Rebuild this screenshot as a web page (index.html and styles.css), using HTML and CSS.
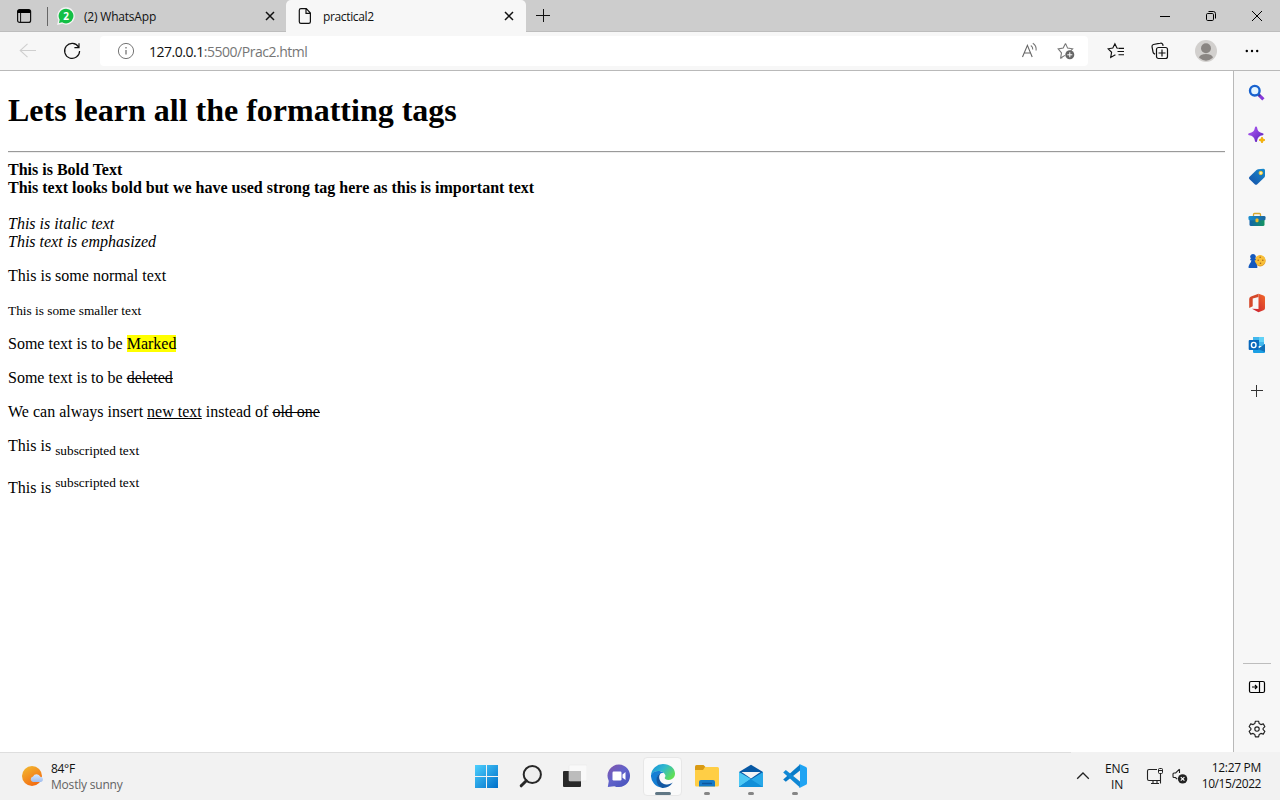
FILE: index.html
```html
<!DOCTYPE html>
<html lang="en">
<head>
<meta charset="utf-8">
<title>practical2</title>
<link rel="stylesheet" href="styles.css">
</head>
<body>
<div class="desktop">
  <header class="tabstrip">
    <span class="tab-actions"><svg width="16" height="16" viewBox="0 0 16 16"><rect x="1.6" y="1.6" width="13" height="12.8" rx="2" fill="none" stroke="#111" stroke-width="1.2"/><path d="M1.5 5V3.5a2 2 0 0 1 2-2h9a2 2 0 0 1 2 2V5z" fill="#000"/><path d="M4.6 5v9" stroke="#111"/></svg></span>
    <div class="tab">
      <svg width="18" height="18" viewBox="0 0 18 18"><path d="M9 1a8 8 0 1 1-3.8 15L1 17l1-4.1A8 8 0 0 1 9 1z" fill="#13bf45" stroke="#f4f4f4" stroke-width="1.3"/><text x="9" y="13" text-anchor="middle" class="badge">2</text></svg>
      <span class="tab-title whatsapp">(2) WhatsApp</span>
      <svg class="close" width="10" height="10" viewBox="0 0 10 10"><path d="M1 1l8 8M9 1l-8 8" stroke="#111" stroke-width="1.5"/></svg>
    </div>
    <div class="tab active">
      <svg width="14" height="18" viewBox="0 0 14 18"><path d="M3 1.6h5.3L12.4 6v8.7a1.7 1.7 0 0 1-1.7 1.7H3a1.7 1.7 0 0 1-1.7-1.7V3.3A1.7 1.7 0 0 1 3 1.6zM8 1.8V6.4h4.2" fill="none" stroke="#111" stroke-width="1.2"/></svg>
      <span class="tab-title practical">practical2</span>
      <svg class="close" width="10" height="10" viewBox="0 0 10 10"><path d="M1 1l8 8M9 1l-8 8" stroke="#111" stroke-width="1.5"/></svg>
    </div>
    <span class="new-tab"><svg width="14" height="14" viewBox="0 0 14 14"><path d="M0 6.5h14M7.5 0v13" stroke="#111"/></svg></span>
    <div class="window-buttons">
      <span><svg width="10" height="10" viewBox="0 0 10 10"><path d="M0 5.5h10" stroke="#000"/></svg></span>
      <span><svg width="10" height="10" viewBox="0 0 10 10"><rect x=".5" y="2.5" width="7" height="7" rx="1.2" fill="none" stroke="#000"/><path d="M2.5.5h4.8a2.2 2.2 0 0 1 2.2 2.2v4.8" fill="none" stroke="#000"/></svg></span>
      <span><svg width="10" height="10" viewBox="0 0 10 10"><path d="M0 0l10 10M10 0L0 10" stroke="#000"/></svg></span>
    </div>
  </header>

  <div class="toolbar">
    <span class="tool"><svg width="18" height="16" viewBox="0 0 18 16"><path d="M17 7.5H1.5M8.5 .8L1.2 7.5l7.3 6.7" fill="none" stroke="#cfcfcf" stroke-width="1.1"/></svg></span>
    <span class="tool"><svg width="18" height="18" viewBox="0 0 18 18"><path d="M15.5 5A7.5 7.5 0 1 0 16.6 9M16 1.2V5.6h-4.6" fill="none" stroke="#111" stroke-width="1.2"/></svg></span>
    <div class="address">
      <svg width="18" height="18" viewBox="0 0 18 18"><circle cx="9" cy="9" r="7.6" fill="none" stroke="#767676"/><path d="M9 8v4.6M9 5v1.5" stroke="#767676" stroke-width="1.3"/></svg>
      <span class="url"><b>127.0.0.1</b>:5500/Prac2.html</span>
      <svg class="read" width="18" height="18" viewBox="0 0 18 18"><path d="M1.5 15L6.4 3.4 11.2 15M3.2 11h6.2" fill="none" stroke="#666" stroke-width="1.1"/><path d="M9.8 3.5a4 4 0 0 1 1.9 4M11.8 1.3a7.5 7.5 0 0 1 3.3 7.2" fill="none" stroke="#777" stroke-width="1.1"/></svg>
      <svg width="18" height="18" viewBox="0 0 18 18"><path d="M8.5 1.4l2.1 4.7 5 .7-2 2M5.4 15.8l-1.8.2.9-5.2L1.2 6.9l5-.8 2.3-4.7M3.6 16L8 13.4" fill="none" stroke="#777" stroke-width="1.1"/><circle cx="12.8" cy="12.8" r="4.5" fill="#666"/><path d="M10.3 12.8h5M12.8 10.3v5" stroke="#fff"/></svg>
    </div>
    <span class="tool"><svg width="18" height="18" viewBox="0 0 18 18"><path d="M11.2 6.2L9.9 6 7.9 1.8 5.8 6 1.2 6.8l3.4 3.5-.9 5.1 4.7-2.6M11.5 6.3H17M10.5 9.5H17M11.5 12.7H17" fill="none" stroke="#111" stroke-width="1.15"/></svg></span>
    <span class="tool"><svg width="18" height="18" viewBox="0 0 18 18"><path d="M4 12.3L2.4 11A2 2 0 0 1 2 9.8L1 4.6a2 2 0 0 1 1.4-2.1l7-1.4a2 2 0 0 1 2.3 1.2l.4 1.5" fill="none" stroke="#111" stroke-width="1.2"/><rect x="5.5" y="5.5" width="11" height="11" rx="2" fill="#f7f7f7" stroke="#111" stroke-width="1.2"/><path d="M7.5 11h7M11 7.5v7" stroke="#111" stroke-width="1.2"/></svg></span>
    <span class="tool profile"><svg width="22" height="22" viewBox="0 0 22 22"><circle cx="11" cy="11" r="11" fill="#d2d0ce"/><circle cx="11" cy="8.2" r="5" fill="#8a8683"/><path d="M4.1 17.8a6.9 3.8 0 0 1 13.8 0Q11 23.5 4.1 17.8z" fill="#8a8683"/></svg></span>
    <span class="tool profile"><svg width="14" height="4" viewBox="0 0 14 4"><circle cx="1.8" cy="2" r="1.2"/><circle cx="7" cy="2" r="1.2"/><circle cx="12.2" cy="2" r="1.2"/></svg></span>
  </div>

  <div class="browser-body">
    <main class="page">
      <h1>Lets learn all the formatting tags</h1>
      <hr>
      <b>This is Bold Text</b><br>
      <strong>This text looks bold but we have used strong tag here as this is important text</strong><br><br>
      <i>This is italic text</i><br>
      <em>This text is emphasized</em>
      <p>This is some normal text</p>
      <p><small>This is some smaller text</small></p>
      <p>Some text is to be <mark>Marked</mark></p>
      <p>Some text is to be <del>deleted</del></p>
      <p>We can always insert <ins>new text</ins> instead of <del>old one</del></p>
      <p>This is <sub>subscripted text</sub></p>
      <p class="super">This is <sup>subscripted text</sup></p>
    </main>
    <aside class="sidebar">
      <span><svg width="18" height="18" viewBox="0 0 18 18"><path d="M10.8 10.8l4.6 4.6" stroke="#8638d9" stroke-width="3.2"/><path d="M10 10l2 2" stroke="#4a3a8c" stroke-width="2.4"/><circle cx="6.8" cy="6.7" r="4.8" fill="#e3f5ff" stroke="#1862cf" stroke-width="2.4"/></svg></span>
      <span><svg width="18" height="18" viewBox="0 0 18 18"><defs><linearGradient id="spark" x2="1" y2="1"><stop stop-color="#b05cf5"/><stop offset="1" stop-color="#5b20ba"/></linearGradient></defs><path d="M8 1.5Q8.8 7.6 14.5 8.3 8.8 9 8 15 7.2 9 1.2 8.3 7.2 7.6 8 1.5z" fill="url(#spark)" stroke="url(#spark)" stroke-width="2" stroke-linejoin="round"/><path d="M14 11Q14.4 13.6 17 14 14.4 14.4 14 17 13.6 14.4 11 14 13.6 13.6 14 11z" fill="#fbb800" stroke="#f0ae10"/></svg></span>
      <span><svg width="18" height="18" viewBox="0 0 18 18"><defs><linearGradient id="tag" x1="1" x2="0" y2="1"><stop stop-color="#168bcc"/><stop offset="1" stop-color="#174fa8"/></linearGradient></defs><path d="M10 1.2l5.5-.4q1.5 0 1.5 1.5v5.4q0 1-.7 1.7L9 16.5q-1 .7-2 0L1.3 11q-.8-1 0-2L8.5 2z" fill="url(#tag)"/><circle cx="12.8" cy="5" r="1.7" fill="#fff0b0" stroke="#f3c631"/></svg></span>
      <span><svg width="18" height="18" viewBox="0 0 18 18"><defs><linearGradient id="case" x2="1"><stop stop-color="#1261aa"/><stop offset="1" stop-color="#159661"/></linearGradient><linearGradient id="lid" x2="1"><stop stop-color="#1b8fd0"/><stop offset="1" stop-color="#1a659c"/></linearGradient></defs><path d="M5.5 6V4.5q0-1 1-1h5q1 0 1 1V6" fill="none" stroke="#d9a72d" stroke-width="1.3"/><path d="M1.5 9h15v5.5q0 1.5-1.5 1.5H3q-1.5 0-1.5-1.5z" fill="url(#case)"/><path d="M1.8 6h14.4q1.3 0 1.3 1.3V9q0 1.3-1.3 1.3H1.8Q.5 10.3.5 9V7.3Q.5 6 1.8 6z" fill="url(#lid)"/><rect x="7.5" y="8.5" width="3" height="3.8" rx="1" fill="#f1bd28"/></svg></span>
      <span><svg width="18" height="18" viewBox="0 0 18 18"><circle cx="12.2" cy="9" r="5.4" fill="#e19a25"/><circle cx="12.2" cy="8.3" r="5.2" fill="#f8bf38"/><g fill="#a96618"><circle cx="12.2" cy="5.3" r=".8"/><circle cx="10.2" cy="8.3" r=".8"/><circle cx="14.8" cy="8.3" r=".8"/><circle cx="12.5" cy="11.2" r=".8"/></g><path d="M5 2a2.7 2.7 0 0 1 1.8 4.8h1v1.4H6.7q.1 2.5 1.8 3.8l.8 2.2V16H.6v-1.8l1-2.2q1.6-1.300 1.800-3.800H2.200V6.800h1A2.7 2.7 0 0 1 5 2z" fill="#1559bd"/></svg></span>
      <span><svg width="18" height="20" viewBox="0 0 18 20"><defs><linearGradient id="off" x1="0" y1="1" x2="1" y2="0"><stop stop-color="#c71832"/><stop offset="1" stop-color="#f26b2a"/></linearGradient></defs><path d="M10.5 .8L3 3.4Q1.2 4.3 1.2 6v8.9l3.5-1.7V5.6l5.8-1.7z" fill="#d5482a"/><path d="M10.5.8l5 1.7q1.5.6 1.5 2v10.8q0 1.5-1.5 2l-5 2-6.5-3.6 6.500.4z" fill="url(#off)"/></svg></span>
      <span><svg width="18" height="18" viewBox="0 0 18 18"><path d="M5 1h10q1 0 1 1v8H5z" fill="#42b7ed"/><path d="M11 1h5v5h-5z" fill="#61d2f7"/><path d="M5 4h6v6H5z" fill="#0871bd"/><path d="M5 9l6 3.5L17 8v8q0 1-1 1H6q-1 0-1-1z" fill="#1b9fe4"/><path d="M10 13l7-5v8z" fill="#1370b7"/><rect x=".7" y="4" width="10" height="10" rx="1" fill="#0868bc"/><ellipse cx="5.7" cy="9" rx="2.3" ry="2.6" fill="none" stroke="#fff" stroke-width="1.4"/></svg></span>
      <span class="add"><svg width="12" height="12" viewBox="0 0 12 12"><path d="M0 5.5h12M5.5 0v12" stroke="#333"/></svg></span>
      <div class="divider"></div>
      <span><svg width="18" height="18" viewBox="0 0 18 18"><rect x="1.5" y="3.5" width="15" height="11" rx="1.5" fill="none" stroke="#000" stroke-width="1.2"/><path d="M11.5 3.5v11M4 9h5M7 7l2 2-2 2" fill="none" stroke="#000" stroke-width="1.2"/></svg></span>
      <span><svg width="18" height="18" viewBox="0 0 18 18"><path d="M7.4 1.2h3.2l.6 2.4 1.7 1 2.4-.7 1.6 2.8L15.1 8.4v1.2l1.8 1.7-1.6 2.8-2.4-.7-1.7 1-.6 2.4H7.4l-.6-2.4-1.7-1-2.4.7-1.6-2.8 1.8-1.7V8.4L1.1 6.7l1.6-2.8 2.4.7 1.7-1z" stroke-linejoin="round" fill="none" stroke="#222" stroke-width="1.15"/><circle cx="9" cy="9" r="2.2" fill="none" stroke="#222" stroke-width="1.15"/></svg></span>
    </aside>
  </div>

  <footer class="taskbar">
    <div class="weather">
      <svg width="24" height="24" viewBox="0 0 24 24"><defs><linearGradient id="sun" x2=".6" y2="1"><stop stop-color="#f2bd32"/><stop offset="1" stop-color="#f36c12"/></linearGradient><linearGradient id="cloud" x2="0" y2="1"><stop stop-color="#d7eaff"/><stop offset="1" stop-color="#9fbcee"/></linearGradient></defs><circle cx="11" cy="12" r="10" fill="url(#sun)"/><path d="M12 18a2.8 2.8 0 0 1 0-5.5 4 4 0 0 1 7.3.2A2.7 2.7 0 0 1 20 18z" fill="url(#cloud)"/></svg>
      <div><div class="deg">84°F</div><div class="sunny">Mostly sunny</div></div>
    </div>
    <nav class="apps">
      <span><svg width="24" height="24" viewBox="0 0 24 24"><defs><linearGradient id="win" gradientUnits="userSpaceOnUse" x1="0" y1="0" x2="23" y2="23"><stop stop-color="#4fd2ff"/><stop offset="1" stop-color="#0070ca"/></linearGradient></defs><path d="M0 1h11v11H0zM12 1h11v11H12zM0 13h11v11H0zM12 13h11v11H12z" fill="url(#win)"/></svg></span>
      <span><svg width="24" height="24" viewBox="0 0 24 24"><circle cx="13.3" cy="10.5" r="8.6" fill="#eee" stroke="#272727" stroke-width="2"/><path d="M7.3 16.7L2.2 21.8" stroke="#272727" stroke-width="3" stroke-linecap="round"/></svg></span>
      <span><svg width="24" height="24" viewBox="0 0 24 24"><rect x="0" y="7" width="18" height="16" rx="1" fill="#292929"/><rect x="6" y="1" width="18" height="16" rx="1" fill="#f9f9f9" stroke="#e5e5e5" stroke-width=".5"/><path d="M6 7h12v10H6z" fill="#bcbcbc"/></svg></span>
      <span><svg width="24" height="24" viewBox="0 0 24 24"><defs><linearGradient id="chat" x2=".8" y2="1"><stop stop-color="#8454a9"/><stop offset=".5" stop-color="#6263cb"/><stop offset="1" stop-color="#4854bd"/></linearGradient></defs><path d="M12 .5a11.3 11.3 0 1 1-4.7 21.7L.8 23l1-5.9A11.3 11.3 0 0 1 12 .5z" fill="url(#chat)"/><rect x="5.5" y="7.5" width="9" height="9" rx="1.2" fill="#fff"/><path d="M15.5 10.500L18.5 8v8l-3-2.200z" fill="#fff"/></svg></span>
      <span class="open current"><svg width="24" height="24" viewBox="0 0 24 24"><defs><linearGradient id="edge" x2="1" y2=".6"><stop stop-color="#148ddb"/><stop offset=".5" stop-color="#31b9ce"/><stop offset="1" stop-color="#60df55"/></linearGradient></defs><path d="M0 11A12 12 0 0 1 12 0c7 0 12 4.3 12 9.6 0 4-3 6.3-6.3 6.3-3 0-4.3-1.2-3.9-2.3.5-.8.8-1.4.5-2.5C12.8 6.2 3.5 5.1 0 11z" fill="url(#edge)"/><path d="M0 11c2-4.6 9-5.2 12.8-2.2-7-.3-9 8.4-2.4 14.8A12 12 0 0 1 0 11z" fill="#157fd4"/><path d="M10 9.1c-4.4 4.2-.3 12 6 11.4 2.4-.1 4.3-.9 5.8-1.9a12 12 0 0 1-10.7 5.3C4.5 22 3.4 11.3 10 9.1z" fill="#1358a3"/></svg></span>
      <span class="open"><svg width="24" height="24" viewBox="0 0 24 24"><path d="M1.5 1h7L11 3.5V8H0V2.5Q0 1 1.5 1z" fill="#d99a13"/><path d="M10 3h12.5Q24 3 24 4.5V21q0 1.5-1.5 1.5h-21Q0 22.5 0 21V6h8z" fill="#ffce45"/><path d="M4 22.5V18q0-2 2-2h12q2 0 2 2v4.5z" fill="#147ac7"/><path d="M7 19.5h10" stroke="#0b559c" stroke-width="1.5"/></svg></span>
      <span class="open"><svg width="24" height="24" viewBox="0 0 24 24"><path d="M0 8L12 .8 24 8v15H0z" fill="#0758a4"/><path d="M0 8l12 7L0 23z" fill="#4cc8f5"/><path d="M24 8v15H0L24 8z" fill="#28a8e8"/><path d="M11.5 15L24 23H0z" fill="#118fd8"/><path d="M2.5 8h19L12 14.500z" fill="#f4f4f6"/></svg></span>
      <span class="open"><svg width="24" height="24" viewBox="0 0 24 24"><path d="M17 6.5L2.8 17.8.2 15.4 17 .6z" fill="#087bc8"/><path d="M.2 8.5l2.6-2.4L17 17.5v6z" fill="#1088d5"/><path d="M17 .3l6 2.8q1 .5 1 1.6v14.5q0 1-1 1.5l-6 3q-1 .3-1.7-.4 1.7.4 1.7-1.3V2Q17 .2 15.3.7q.7-.7 1.7-.4z" fill="#20a4f3"/></svg></span>
    </nav>
    <div class="tray">
      <svg class="chev" width="14" height="8" viewBox="0 0 14 8"><path d="M1.2 6.8L7 1l5.8 5.8" fill="none" stroke="#222" stroke-width="1.3"/></svg>
      <div class="lang">ENG<br>IN</div>
      <svg class="net" width="18" height="18" viewBox="0 0 18 18"><path d="M11 2.5H3Q1.5 2.5 1.5 4v8q0 1.5 1.5 1.5h11M5 16.5h8M7 13.5v3M11 13.5v3M14.5 7v9.5" fill="none" stroke="#222" stroke-width="1.1"/><rect x="12.5" y="1.5" width="4" height="5" rx="1" fill="#eee" stroke="#222"/><path d="M12.5 3.5h4" stroke="#222"/></svg>
      <svg class="vol" width="16" height="16" viewBox="0 0 16 16"><path d="M7.5 1.2L3.7 5H2Q1 5 1 6v2.5q0 1 1 1h1.5l1.7 1.7M7.5 1.2V5" fill="none" stroke="#222" stroke-width="1.1"/><circle cx="10.6" cy="10.9" r="4.7" fill="#222"/><path d="M8.8 9.1l3.6 3.6M12.4 9.1l-3.6 3.6" stroke="#fff" stroke-width="1.1"/></svg>
      <div class="clock"><div class="time">12:27 PM</div><div class="date">10/15/2022</div></div>
    </div>
  </footer>
</div>
</body>
</html>
```

FILE: styles.css
```css
* { box-sizing: border-box; }
body { margin: 0; font-family: "Open Sans", "Noto Sans", sans-serif; font-size: 12px; color: #111; }
svg { display: block; flex: none; }
.desktop { width: 1280px; height: 800px; display: flex; flex-direction: column; overflow: hidden; background: #f7f7f7; }

.tabstrip { height: 32px; flex: none; display: flex; background: #cdcdcd; box-shadow: inset 0 -1px #bdbdbd; }
.tab-actions { width: 48px; padding-left: 16px; display: flex; align-items: center; background: linear-gradient(#666, #666) 47px 7px / 1px 19px no-repeat; }
.tab { width: 238px; display: flex; align-items: center; padding: 0 11px 0 9px; border-radius: 0 0 5px 0; }
.tab.active { width: 240px; background: #f7f7f7; border-radius: 5px 5px 0 0; padding: 0 12px; }
.tab-title { white-space: nowrap; }
.whatsapp { margin-left: 9px; letter-spacing: -.2px; }
.practical { margin-left: 11px; letter-spacing: -.35px; }
.close { margin-left: auto; }
.badge { font: bold 10px "Open Sans", sans-serif; fill: #fff; }
.new-tab { width: 34px; display: flex; align-items: center; justify-content: center; }
.window-buttons { display: flex; margin-left: auto; }
.window-buttons span { width: 46px; display: flex; align-items: center; justify-content: center; }

.toolbar { height: 38px; flex: none; display: flex; align-items: center; padding-left: 6px; }
.tool { width: 44px; display: flex; justify-content: center; }
.tool.profile { width: 46px; }
.tool.profile:nth-last-child(2) { margin-left: 1px; }
.address { width: 988px; height: 30px; margin: 0 6px; padding: 0 13px 0 17px; display: flex; align-items: center; background: #fff; border-radius: 4px; }
.url { margin-left: 14px; font-size: 14px; color: #767676; letter-spacing: -.48px; white-space: nowrap; }
.url b { font-weight: 400; color: #111; }
.read { margin: 0 18px 0 auto; }

.browser-body { height: 682px; flex: none; display: flex; border-top: 1px solid #b9b9b9; }
.page { width: 1234px; padding: 0 8px; border-right: 1px solid #b9b9b9; background: #fff; color: #000; font: 16px/18px "Liberation Serif", serif; }
.page h1 { margin: 21px 0 22px; font-size: 32px; line-height: 37px; }
.page hr { margin: 0 0 8px; height: 2px; border: 0; border-top: 1px solid #9a9a9a; border-bottom: 1px solid #eee; }
.page p { margin: 16px 0; }
.page p.super { margin-top: 17px; }
.page small, .page sub, .page sup { font-size: 13.33px; line-height: 15px; }
.page mark { background: #ff0; }

.sidebar { width: 46px; display: flex; flex-direction: column; padding-top: 1px; }
.sidebar span { height: 42px; flex: none; display: flex; align-items: center; justify-content: center; }
.sidebar .add { height: 50px; }
.divider { height: 1px; flex: none; margin: auto 9px 2px; background: #bdbdbd; }
.sidebar span:last-child { margin-bottom: 2px; }

.taskbar { height: 48px; flex: none; display: grid; grid-template-columns: 465px 352px 463px; background: linear-gradient(#dedede, #dedede) 0 0 / 1071px 1px no-repeat #f2f2f2; }
.weather { display: flex; align-items: center; padding-left: 21px; line-height: 16px; }
.weather > div { margin-left: 6px; padding-top: 2px; }
.deg { letter-spacing: -.3px; }
.sunny { color: #636363; letter-spacing: -.2px; }
.apps { display: flex; }
.apps span { width: 44px; position: relative; display: flex; align-items: center; justify-content: center; }
.current::before { content: ""; position: absolute; inset: 5px 3px 4px 2px; background: #fafafa; border: 1px solid #e7e7e7; border-radius: 4px; }
.apps svg { position: relative; }
.open::after { content: ""; position: absolute; bottom: 5px; left: 19px; width: 6px; height: 3px; border-radius: 2px; background: #858585; }
.open.current::after { left: 14px; width: 16px; background: #607785; }
.tray { display: flex; align-items: center; justify-content: flex-end; padding-right: 19px; line-height: 16px; white-space: nowrap; }
.chev { margin-right: 14px; }
.lang { width: 26px; padding-top: 2px; text-align: center; letter-spacing: -.2px; }
.net { margin-left: 16px; }
.vol { margin-left: 8px; }
.clock { width: 73px; text-align: right; }
.time { letter-spacing: -.3px; }
.date { letter-spacing: -.45px; }
```
